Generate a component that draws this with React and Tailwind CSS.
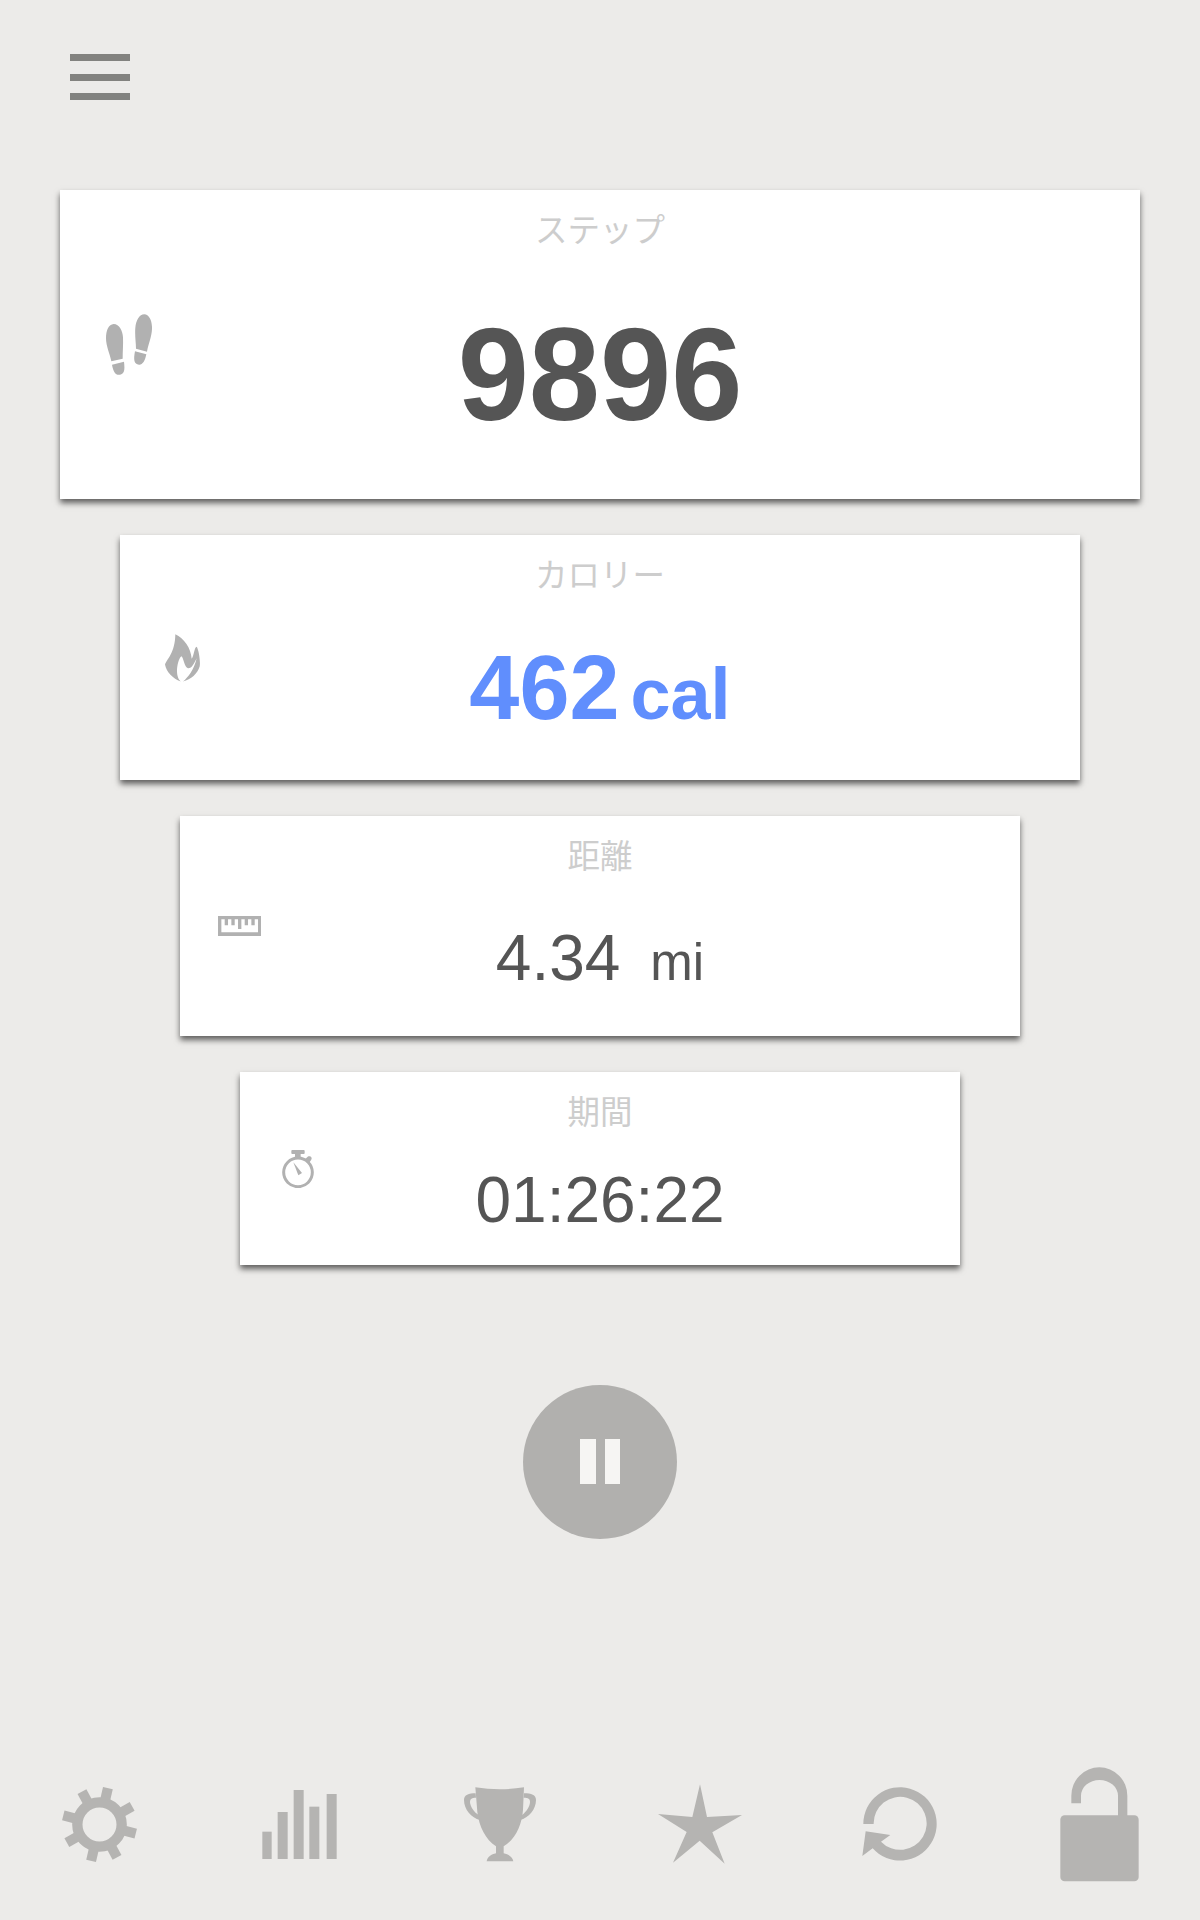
import React from 'react';

const FootIcon = () => (
  <svg className="w-[46px] h-[61px] fill-[#b1b1b1]" viewBox="0 0 138 183">
    <path d="M23 30C40 30 50 50 51 70C52 92 50 112 50 134L16 142C11 118 0 96 0 73C0 49 8 31 23 30Z" />
    <path d="M18 152L54 143C56 161 57 177 46 181C31 187 22 176 18 152Z" />
    <path d="M115 1C130 1 139 22 138 45C137 69 127 90 123 113L90 104C90 86 86 65 88 41C90 20 100 1 115 1Z" />
    <path d="M87 112L121 121C117 142 109 153 99 152C84 151 82 137 87 112Z" />
  </svg>
);

const FlameIcon = () => (
  <svg className="w-[35px] h-[48px] fill-[#b1b1b1]" viewBox="0 0 105 143">
    <path d="M31 0C57 12 78 41 80 74C87 65 88 39 95 38C101 46 107 82 104 97C98 118 78 136 54 142C68 130 88 106 95 72C88 87 80 103 69 102C58 100 56 70 49 66C41 73 36 94 36 110C36 127 41 136 47 142C24 133 4 114 0 91C6 74 30 56 31 0Z" />
  </svg>
);

const RulerIcon = () => (
  <svg className="w-[43.4px] h-5 fill-[#b1b1b1]" viewBox="0 0 130 60">
    <path
      fillRule="evenodd"
      d="M0 0H130V60H0ZM10 10V49H120V10H110V28H100V10H90V28H80V10H70V39H60V10H50V28H40V10H30V28H20V10Z"
    />
  </svg>
);

const StopwatchIcon = () => (
  <svg className="w-[32px] h-[38px]" viewBox="0 0 96 114">
    <circle cx="48" cy="67" r="43" fill="none" stroke="#b1b1b1" strokeWidth="9" />
    <g fill="#b1b1b1">
      <rect x="28" y="0" width="40" height="12" rx="3" />
      <path d="M39 10H56V24H39Z" />
      <path d="M69 28L77 20C80 18 86 18 88 22C91 27 87 31 83 36L79 38Z" />
      <path d="M34 37L60 69L49 76Z" />
    </g>
  </svg>
);

const GearIcon = () => (
  <svg className="w-[75px] h-[75px]" viewBox="-112.5 -112.5 225 225">
    <circle r="66.5" fill="none" stroke="#b5b4b2" strokeWidth="31" />
    {[13, 61, 104, 152, 193, 241, 284, 332].map((a) => (
      <rect key={a} x="-15" y="-112" width="30" height="38" fill="#b5b4b2" transform={`rotate(${a})`} />
    ))}
  </svg>
);

const BarsIcon = () => (
  <svg className="w-[75px] h-[69px] fill-[#b5b4b2]" viewBox="0 0 225 207">
    <rect x="1" y="125" width="28" height="82" />
    <rect x="47" y="66" width="30" height="141" />
    <rect x="95" y="0" width="30" height="207" />
    <rect x="142" y="50" width="30" height="157" />
    <rect x="194" y="12" width="30" height="195" />
  </svg>
);

const TrophyIcon = () => (
  <svg className="w-[72px] h-[75px] fill-[#b5b4b2]" viewBox="0 0 216 225">
    <path d="M34 1Q108 13 180 1L177 68C174 114 153 158 119 178V199C133 202 146 210 148 223H68C70 210 82 202 96 199V178C65 158 45 118 40 75Z" />
    <path
      fillRule="evenodd"
      d="M35 19C14 19 0 24 0 39C0 67 22 93 48 99L44 84C30 76 18 57 18 45C18 35 24 32 36 32ZM180 19C202 19 216 24 216 39C216 67 194 93 168 99L174 84C188 74 198 57 198 45C198 35 193 32 179 32Z"
    />
  </svg>
);

const StarIcon = () => (
  <svg className="w-[84px] h-[80px] fill-[#b5b4b2]" viewBox="0 0 252 240">
    <path d="M126 1L147 99L252 93L163 145L200 239L125 170L45 236L86 144L0 90L103 99Z" />
  </svg>
);

const ResetIcon = () => (
  <svg className="w-[75px] h-[74px] fill-[#b5b4b2]" viewBox="0 0 225 222">
    <path d="M4 111A110 110 0 1 1 32 184L1 207L11 133L85 144L57 164A79.500 79.500 0 1 0 35 111Z" />
  </svg>
);

const UnlockIcon = () => (
  <svg className="w-[79px] h-[115px] fill-[#b5b4b2]" viewBox="0 0 237 345">
    <rect x="1" y="145" width="235" height="198" rx="13" />
    <path d="M34 109V86A84 85 0 0 1 202 86V150H174V86A55.500 47 0 0 0 63 86V109Z" />
  </svg>
);

const Card = ({ size, icon, label, children }) => (
  <section
    className={`${size} grid grid-cols-[120px_1fr_120px] bg-white shadow-[0_4px_6px_rgba(0,0,0,0.6)]`}
  >
    <div className="flex items-center">{icon}</div>
    <div className="flex flex-col items-center pt-[22px]">
      <h2 className="text-[32.5px] leading-8 font-normal text-[#cdcdcd] font-['Noto_Sans_CJK_JP',sans-serif]">{label}</h2>
      {children}
    </div>
  </section>
);

const tabs = [
  { name: '設定', Icon: GearIcon },
  { name: '統計', Icon: BarsIcon },
  { name: '実績', Icon: TrophyIcon },
  { name: '評価', Icon: StarIcon },
  { name: 'リセット', Icon: ResetIcon },
  { name: 'ロック解除', Icon: UnlockIcon },
];

const App = () => {
  return (
    <div className="flex h-[1920px] w-[1200px] flex-col bg-[#ecebe9] text-[#555] font-['Liberation_Sans',Arial,'Noto_Sans_CJK_JP',sans-serif]">
      <header className="h-[190px] pt-[54px] pl-[70px]">
        <button aria-label="メニュー" className="flex h-[46px] w-[60px] flex-col justify-between">
          <span className="h-[7px] w-full bg-[#82827f]" />
          <span className="h-[7px] w-full bg-[#82827f]" />
          <span className="h-[7px] w-full bg-[#82827f]" />
        </button>
      </header>

      <main className="flex flex-col items-center gap-9">
        <Card size="w-[1080px] h-[309px]" label="ステップ" icon={<div className="ml-[46px]"><FootIcon /></div>}>
          <p className="mt-[67px] origin-center scale-y-[1.03] text-[128px] leading-none font-bold">9896</p>
        </Card>

        <Card size="w-[960px] h-[245px]" label="カロリー" icon={<div className="ml-[45px]"><FlameIcon /></div>}>
          <p className="mt-[54px] flex items-baseline gap-[11px] text-[90px] leading-none font-bold text-[#608efd]">
            462<span className="text-[72px] leading-none">cal</span>
          </p>
        </Card>

        <Card size="w-[840px] h-[220px]" label="距離" icon={<div className="ml-[38px]"><RulerIcon /></div>}>
          <p className="mt-14 flex items-baseline gap-[30px] text-[64px] leading-none">
            4.34<span className="text-[51px] leading-none">mi</span>
          </p>
        </Card>

        <Card size="w-[720px] h-[193px]" label="期間" icon={<div className="ml-[41.5px]"><StopwatchIcon /></div>}>
          <p className="mt-[42px] text-[64px] leading-none">01:26:22</p>
        </Card>
      </main>

      <button
        aria-label="一時停止"
        className="mt-[120px] flex size-[154px] items-center justify-center gap-[9px] self-center rounded-full bg-[#b1b0ae] pb-px"
      >
        <span className="h-[45px] w-[15.5px] bg-[#f6f5f3]" />
        <span className="h-[45px] w-[15.5px] bg-[#f6f5f3]" />
      </button>

      <nav className="mt-auto grid h-48 grid-cols-6">
        {tabs.map(({ name, Icon }) => (
          <button key={name} aria-label={name} className="flex items-center justify-center pr-px">
            <Icon />
          </button>
        ))}
      </nav>
    </div>
  );
};

export default App;
